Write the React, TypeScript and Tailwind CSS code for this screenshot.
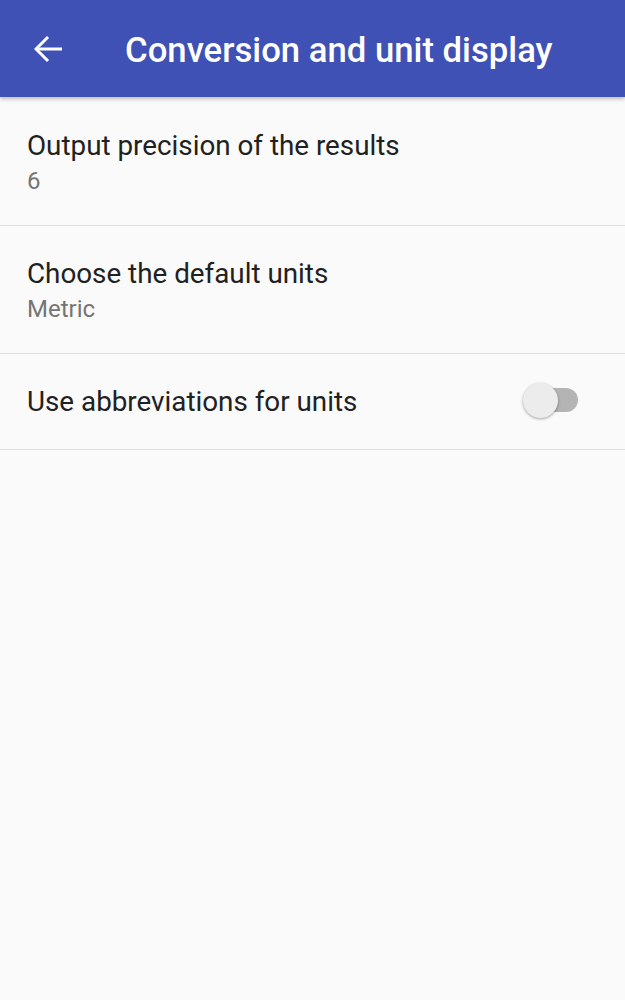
import React from "react";

export default function App() {
  return (
    <div className="w-[625px] h-[1000px] bg-[#fafafa] overflow-hidden" style={{ fontFamily: "Roboto, 'Liberation Sans', sans-serif" }}>
      <div className="h-[97px] bg-[#3f51b5] flex items-center shadow-[0_2px_4px_rgba(0,0,0,0.25)] relative z-10">
        <div className="w-[125px] flex items-center pl-[34px]">
          <svg width="28" height="28" viewBox="0 0 28 28" fill="none">
            <path d="M2 14H28" stroke="#fff" strokeWidth="3" />
            <path d="M14 2L2 14L14 26" stroke="#fff" strokeWidth="3" />
          </svg>
        </div>
        <div className="text-white text-[34.7px] font-medium leading-none mt-[3px]">Conversion and unit display</div>
      </div>
      <div className="h-[129px] flex flex-col justify-center pl-[27px] pt-[3px] border-b border-[#dcdcdc]">
        <div className="text-[27.8px] text-[#212121] leading-[32px]">Output precision of the results</div>
        <div className="text-[24px] text-[#757575] leading-[30px] mt-[4px]">6</div>
      </div>
      <div className="h-[128px] flex flex-col justify-center pl-[27px] pt-[3px] border-b border-[#dcdcdc]">
        <div className="text-[27.8px] text-[#212121] leading-[32px]">Choose the default units</div>
        <div className="text-[24px] text-[#757575] leading-[30px] mt-[4px]">Metric</div>
      </div>
      <div className="h-[96px] flex items-center justify-between pl-[27px] pr-[47px] border-b border-[#dcdcdc]">
        <div className="text-[27.8px] text-[#212121]">Use abbreviations for units</div>
        <div className="relative w-[51px] h-[24px] rounded-full bg-[#b4b4b4] mt-[-3px]">
          <div className="absolute left-[-4px] top-[-5px] w-[35px] h-[35px] rounded-full bg-[#ececec] shadow-[0_1px_3px_rgba(0,0,0,0.35)]" />
        </div>
      </div>
    </div>
  );
}
